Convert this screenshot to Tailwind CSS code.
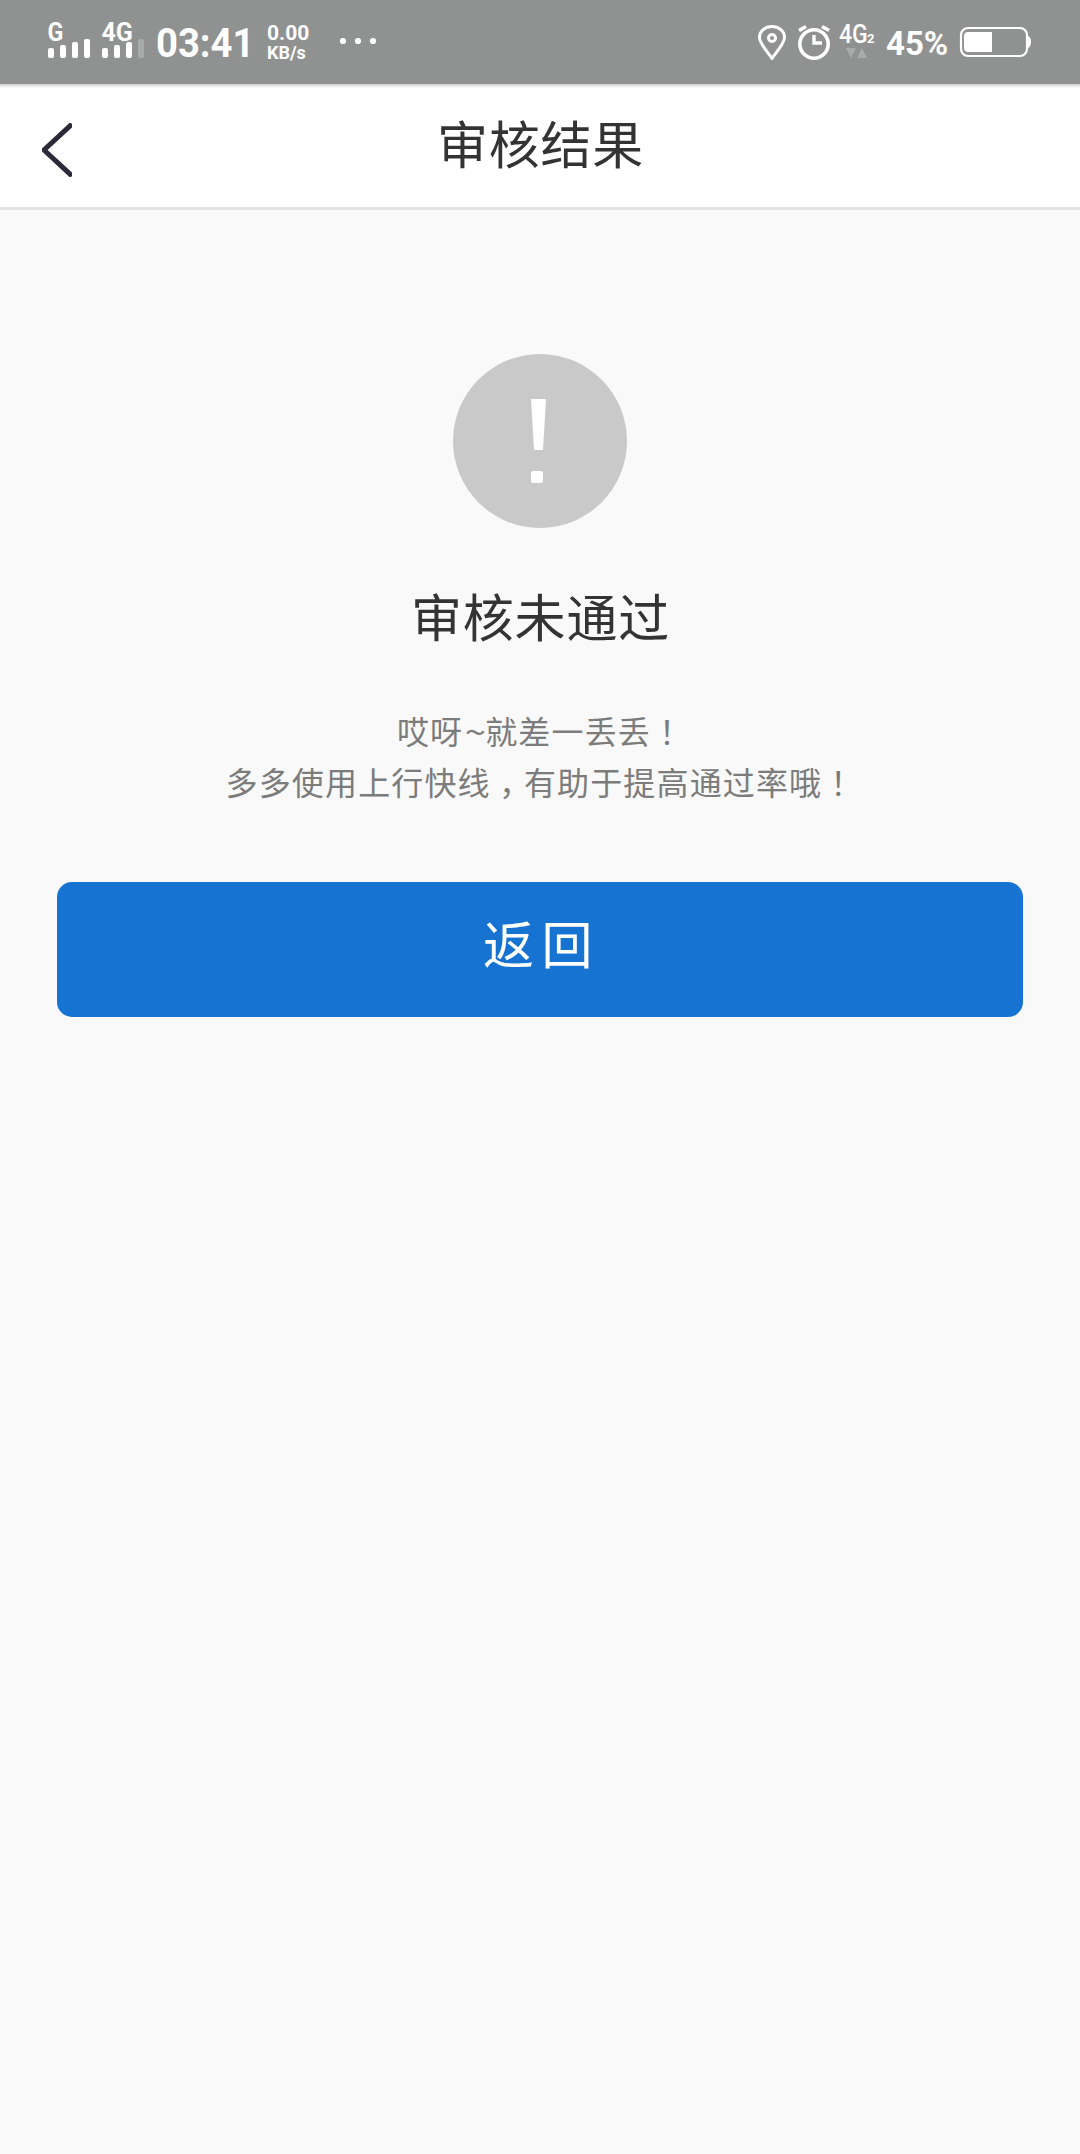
<!DOCTYPE html>
<html lang="zh-CN">
<head>
<meta charset="utf-8">
<title>审核结果</title>
<script src="https://cdn.jsdelivr.net/npm/@tailwindcss/browser@4"></script>
</head>
<body class="h-[2154px] w-[1080px] overflow-hidden bg-[#f9f9f9] font-['Noto_Sans_CJK_SC',sans-serif] text-[#333]">
  <div class="flex h-[84px] items-start bg-[#909291] font-[Roboto,sans-serif] font-bold text-white">
    <div class="ml-[47px] mt-[20px] w-[54px]">
      <div class="h-[19px] text-[25px] leading-[25px]"><span class="inline-block origin-left translate-x-[0.5px] scale-x-[0.93]">G</span></div>
      <svg class="block" width="54" height="20" viewBox="0 0 54 20" fill="#fff"><rect x="1" y="9" width="6" height="10" rx="2"/><rect x="13" y="6" width="6" height="13" rx="2"/><rect x="25" y="3" width="6" height="16" rx="2"/><rect x="37" y="0" width="6" height="19" rx="2"/></svg>
    </div>
    <div class="mt-[20px] w-[55px]">
      <div class="h-[19px] text-[25px] leading-[25px]"><span class="inline-block origin-left translate-x-[0.5px]">4G</span></div>
      <svg class="block" width="54" height="20" viewBox="0 0 54 20" fill="#fff"><rect x="1" y="9" width="6" height="10" rx="2"/><rect x="13" y="6" width="6" height="13" rx="2"/><rect x="25" y="3" width="6" height="16" rx="2"/><rect x="37" y="0" width="6" height="19" rx="2" fill="#a9abaa"/></svg>
    </div>
    <div class="mt-[24px] w-[111px] origin-left scale-x-[0.955] whitespace-nowrap text-[40px] leading-[40px]">03:41</div>
    <div class="mt-[23px] w-[72px]">
      <div class="text-[21px] leading-[21px]">0.00</div>
      <div class="text-[18px] leading-[18px]">KB/s</div>
    </div>
    <svg class="mt-[36px]" width="40" height="10" viewBox="0 0 40 10" fill="#fff"><circle cx="4" cy="5" r="3.1"/><circle cx="19" cy="5" r="3.1"/><circle cx="34" cy="5" r="3.1"/></svg>
    <svg class="ml-auto mt-[24px]" width="30" height="38" viewBox="0 0 30 38" fill="none" stroke="#fff" stroke-width="3"><path d="M14 34.5C11.500 30 1.500 20 1.500 13.500C1.500 7 7 2.500 14 2.500S26.500 7 26.500 13.500C26.500 20 16.500 30 14 34.500Z" stroke-linejoin="round"/><circle cx="14" cy="14" r="3.500"/></svg>
    <svg class="ml-[10px] mt-[24px]" width="34" height="38" viewBox="0 0 34 38" fill="none" stroke="#fff" stroke-width="3.600"><circle cx="16" cy="20" r="14.200"/><path d="M16 11V19H24" stroke-width="3.400"/><path d="M1 6.500L8 2.500M31 6.500L24 2.500"/></svg>
    <div class="ml-[7px] mt-[21px] w-[47px]">
      <div class="flex h-[27px] items-baseline font-medium"><span class="w-[28px] text-[25px] leading-[28px]"><span class="inline-block origin-left scale-x-[0.92]">4G</span></span><span class="text-[13px] font-bold">2</span></div>
      <svg class="block" width="30" height="10" viewBox="0 0 30 10" fill="#a9abaa"><path d="M7 0H17L12 10ZM18 10H28L23 0Z"/></svg>
    </div>
    <div class="mt-[27px] w-[73px] text-[33px] leading-[33px]">45%</div>
    <svg class="mr-[47px] mt-[26px]" width="74" height="32" viewBox="0 0 74 32"><rect x="2" y="2" width="66" height="28" rx="7" fill="none" stroke="#fff" stroke-width="2.200"/><path d="M33 6V26H9Q5 26 5 22V10Q5 6 9 6ZM69 10Q72 11 72 16T69 22Z" fill="#fff"/></svg>
  </div>
  <header class="flex h-[126px] items-start justify-center border-b-[3px] border-[#e4e4e4] bg-white bg-linear-to-b from-[#cfcfcf] to-white to-[4px]">
    <svg class="ml-[42px] mt-[39px]" width="30" height="54" viewBox="0 0 30 54"><path d="M30 1L2 27L30 53" fill="none" stroke="#2c2938" stroke-width="5"/></svg>
    <h1 class="mr-[71px] mt-[22px] flex-1 text-center text-[51px] leading-[72px] tracking-[0.800px]">审核结果</h1>
  </header>
  <main class="flex flex-col items-center">
    <svg class="mt-[144px]" width="174" height="174" viewBox="0 0 174 174"><circle cx="87" cy="87" r="87" fill="#c9c9c9"/><path d="M78 45H93L90 96H81Z" fill="#fff"/><rect x="78" y="117" width="12" height="12" rx="2.500" fill="#fff"/></svg>
    <h2 class="mt-[51px] pl-px text-[51px] leading-[72px] tracking-[0.800px]">审核未通过</h2>
    <p class="mt-[54px] pl-px text-center text-[32px] leading-[51px] tracking-[1.150px] text-[#7c7c7c]">哎呀<span class="inline-block w-[22px] origin-left scale-x-[1.2]">~</span>就差一丢丢<span lang="zh-TW" class="font-['Noto_Sans_CJK_TC',sans-serif]">！</span><br>多多使用上行快线<span lang="zh-TW" class="relative top-[10px] font-['Noto_Sans_CJK_TC',sans-serif]">，</span>有助于提高通过率哦<span lang="zh-TW" class="font-['Noto_Sans_CJK_TC',sans-serif]">！</span></p>
    <button class="mt-[75px] h-[135px] w-[966px] rounded-[15px] bg-[#1673d1] pb-[15px] pl-[3px] text-[51px] leading-[72px] tracking-[7.500px] text-white">返回</button>
  </main>
</body>
</html>
